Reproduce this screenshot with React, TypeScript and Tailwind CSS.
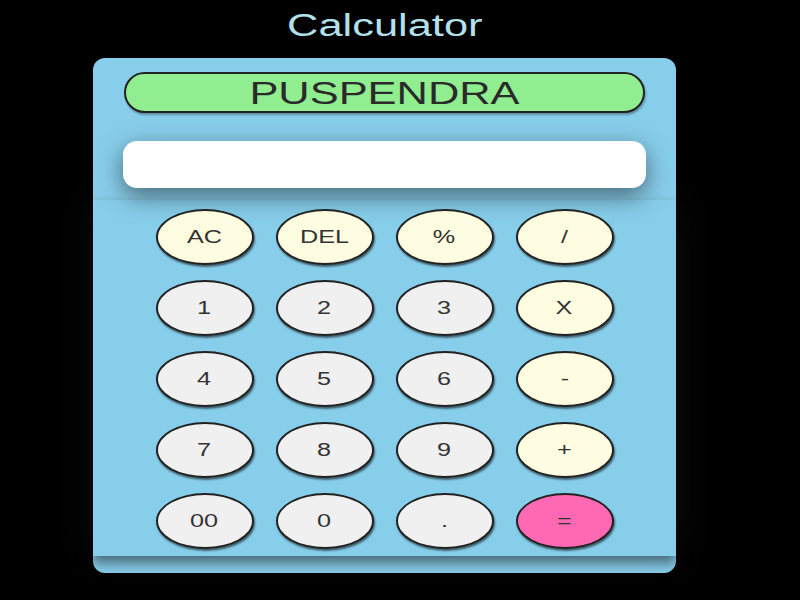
const keys: { label: string; kind: "op" | "num" | "eq" }[] = [
  { label: "AC", kind: "op" },
  { label: "DEL", kind: "op" },
  { label: "%", kind: "op" },
  { label: "/", kind: "op" },
  { label: "1", kind: "num" },
  { label: "2", kind: "num" },
  { label: "3", kind: "num" },
  { label: "X", kind: "op" },
  { label: "4", kind: "num" },
  { label: "5", kind: "num" },
  { label: "6", kind: "num" },
  { label: "-", kind: "op" },
  { label: "7", kind: "num" },
  { label: "8", kind: "num" },
  { label: "9", kind: "num" },
  { label: "+", kind: "op" },
  { label: "00", kind: "num" },
  { label: "0", kind: "num" },
  { label: ".", kind: "num" },
  { label: "=", kind: "eq" },
];

const bgFor = {
  op: "bg-[#fffde1]",
  num: "bg-[#f0f0f0]",
  eq: "bg-[#ff69b4]",
};

export default function App() {
  return (
    <div className="min-h-screen bg-black font-['Liberation_Sans',Arial,sans-serif]">
      <div className="flex w-[769px] flex-col items-center">
        <h1 className="mt-[7px] h-[37px] text-[31px] leading-[37px] text-[#b4e0ec]">
          <span className="inline-block scale-x-[1.4]">Calculator</span>
        </h1>

        <div className="mt-[14px] w-[583px] rounded-[12px] bg-[#87ceeb]">
          <div className="px-[30px] pt-[14px] pb-[12px]">
            <div className="mx-px flex h-[41px] items-center justify-center rounded-full border-2 border-[#222] bg-[#90ee90] pt-[3px] text-[31px] text-[#2a2a2a] shadow-[1px_2px_2px_rgba(0,0,0,0.3)]">
              <span className="inline-block scale-x-[1.4]">PUSPENDRA</span>
            </div>
            <div className="mt-[28px] h-[47px] rounded-[14px] bg-white shadow-[0_8px_24px_rgba(0,0,0,0.5)]" />
          </div>

          <div className="grid grid-cols-[repeat(4,98px)] justify-center gap-x-[22px] gap-y-[15px] pt-[9px] pb-[7px] shadow-[0_7px_12px_rgba(0,0,0,0.5),0_0_40px_rgba(255,255,255,0.07)]">
            {keys.map((k) => (
              <button
                key={k.label}
                className={`flex h-[56px] w-[98px] items-center justify-center rounded-[50%] border-2 border-[#222] pt-px text-[18px] text-[#333] shadow-[1px_2px_2px_rgba(0,0,0,0.55)] ${bgFor[k.kind]}`}
              >
                <span className="inline-block scale-x-[1.4]">{k.label}</span>
              </button>
            ))}
          </div>
          <div className="h-[17px]" />
        </div>
      </div>
    </div>
  );
}
